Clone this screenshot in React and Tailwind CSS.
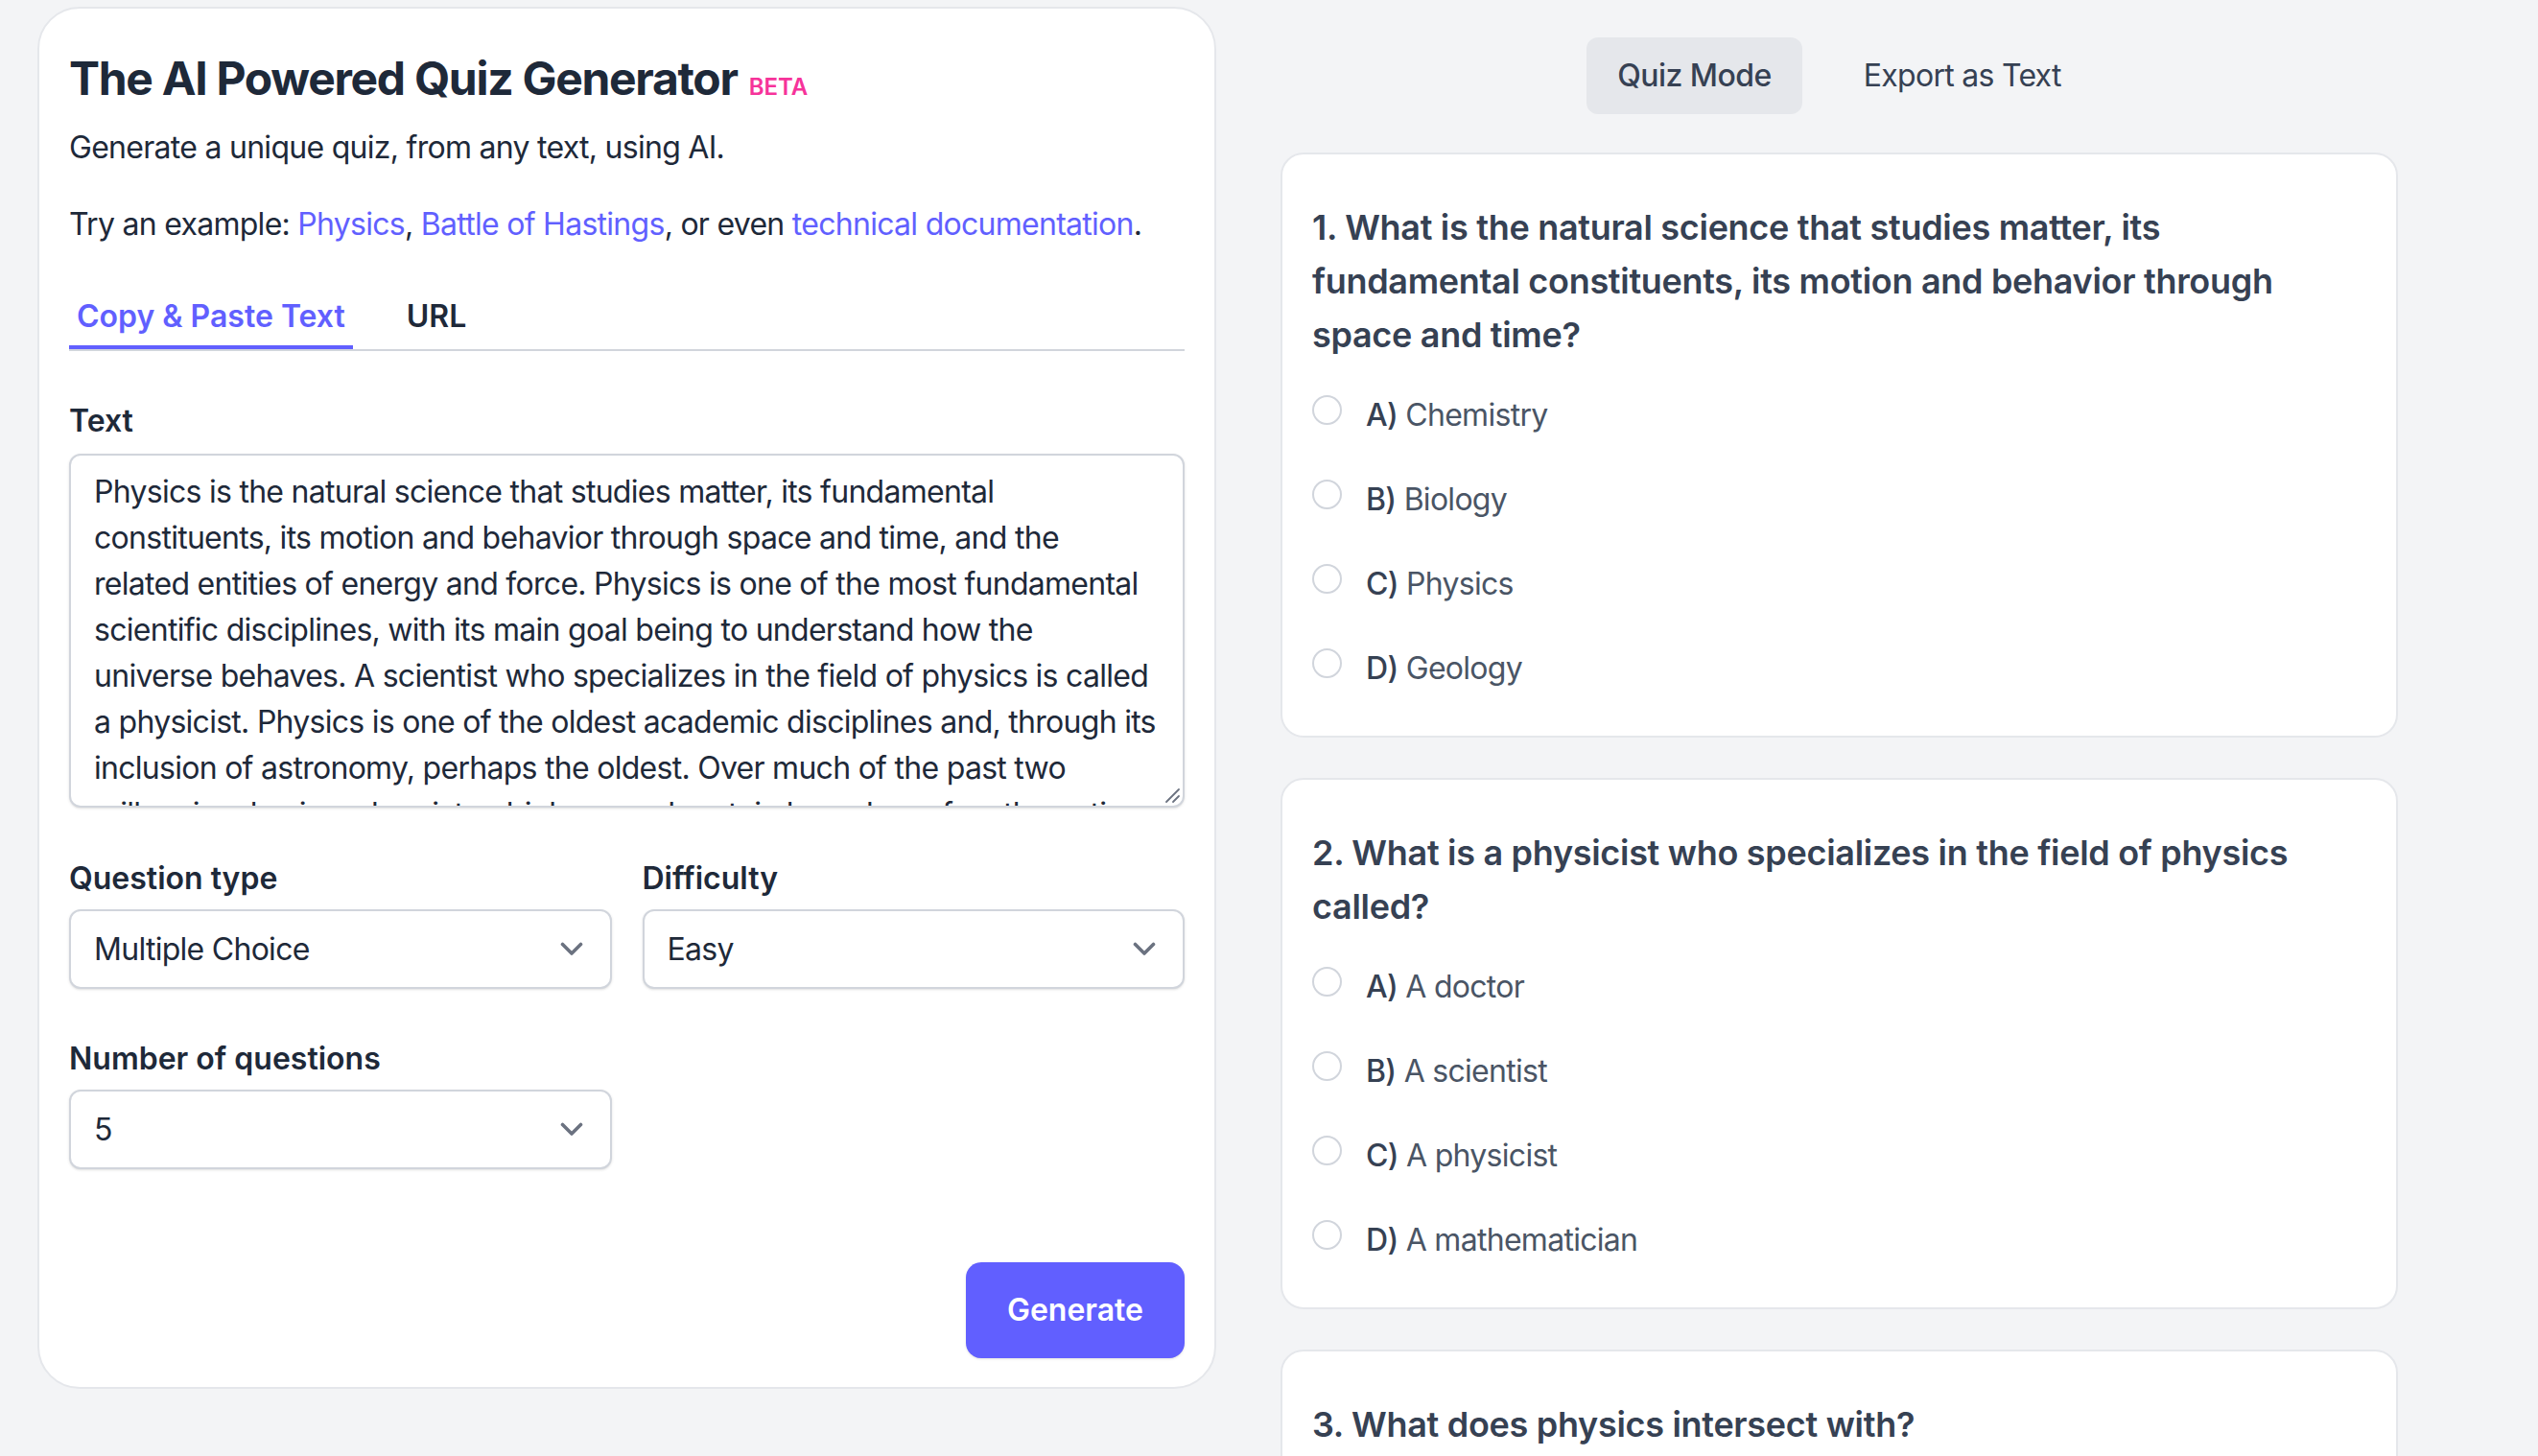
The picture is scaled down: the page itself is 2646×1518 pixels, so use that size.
import React from "react";

function Chevron() {
  return (
    <svg width="24" height="15" viewBox="0 0 24 15" fill="none" className="shrink-0">
      <path d="M2.5 2.5 L12 12 L21.5 2.5" stroke="#6b7280" strokeWidth="3.6" strokeLinecap="round" strokeLinejoin="round" />
    </svg>
  );
}

function Select({ value }) {
  return (
    <div className="flex h-[83px] items-center justify-between rounded-xl border-2 border-gray-300 bg-white pl-[24px] pr-[28px] shadow-sm">
      <span className="text-[32px] leading-[48px] text-gray-800">{value}</span>
      <Chevron />
    </div>
  );
}

function Label({ children }) {
  return <div className="text-[32px] font-semibold leading-[48px] tracking-normal text-gray-800">{children}</div>;
}

const textLines = [
  "Physics is the natural science that studies matter, its fundamental",
  "constituents, its motion and behavior through space and time, and the",
  "related entities of energy and force. Physics is one of the most fundamental",
  "scientific disciplines, with its main goal being to understand how the",
  "universe behaves. A scientist who specializes in the field of physics is called",
  "a physicist. Physics is one of the oldest academic disciplines and, through its",
  "inclusion of astronomy, perhaps the oldest. Over much of the past two",
  "millennia, physics, chemistry, biology, and certain branches of mathematics were",
];

const questions = [
  {
    q: "1. What is the natural science that studies matter, its fundamental constituents, its motion and behavior through space and time?",
    options: ["Chemistry", "Biology", "Physics", "Geology"],
  },
  {
    q: "2. What is a physicist who specializes in the field of physics called?",
    options: ["A doctor", "A scientist", "A physicist", "A mathematician"],
  },
  {
    q: "3. What does physics intersect with?",
    options: ["Chemistry and biology", "Many interdisciplinary areas of research", "Only mathematics", "Nothing"],
  },
];

const letters = ["A", "B", "C", "D"];

function QuestionCard({ q, options }) {
  return (
    <div className="rounded-[24px] border-2 border-gray-200 bg-white px-[31px] pb-[46px] pt-[48px]">
      <h3 className="text-[36px] font-semibold leading-[56px] tracking-[-0.3px] text-gray-700">{q}</h3>
      <div className="mt-8 flex flex-col gap-10">
        {options.map((o, i) => (
          <div key={o} className="flex items-start">
            <span className="mt-[3px] h-[31px] w-[31px] shrink-0 rounded-full border-2 border-gray-300 bg-white" />
            <span className="ml-[25px] text-[32px] leading-[48px] text-gray-600">
              <span className="font-medium text-gray-700">{letters[i]})</span> {o}
            </span>
          </div>
        ))}
      </div>
    </div>
  );
}

export default function App() {
  return (
    <div className="flex h-screen overflow-hidden bg-gray-100 font-['Inter',sans-serif] tracking-[-0.72px] text-gray-800">
      <div className="ml-[39px] mt-[7px] w-[1229px] shrink-0">
        <div className="rounded-[44px] border-2 border-gray-200 bg-white px-[31px] pb-[30px] pt-[41px]">
          <h1 className="text-[48px] font-bold leading-[64px] tracking-[-1.3px] text-gray-800">
            The AI Powered Quiz Generator
            <span className="ml-3 text-[24px] font-semibold leading-none tracking-normal text-pink-500">BETA</span>
          </h1>
          <p className="mt-4 text-[32px] leading-[48px]">Generate a unique quiz, from any text, using AI.</p>
          <p className="mt-8 text-[32px] leading-[48px]">
            Try an example: <span className="text-indigo-500">Physics</span>,{" "}
            <span className="text-indigo-500">Battle of Hastings</span>, or even{" "}
            <span className="text-indigo-500">technical documentation</span>.
          </p>

          <div className="mt-12 flex gap-[48px] border-b-2 border-gray-300 tracking-normal">
            <div className="border-b-4 border-indigo-500 px-[8px] pb-[6px] text-[32px] font-semibold leading-[48px] text-indigo-500">
              Copy &amp; Paste Text
            </div>
            <div className="border-b-4 border-transparent px-[8px] pb-[6px] text-[32px] font-semibold leading-[48px] text-gray-800">
              URL
            </div>
          </div>

          <div className="mt-[49px]">
            <Label>Text</Label>
            <div className="relative mt-[10px] h-[369px] overflow-hidden rounded-xl border-2 border-gray-300 bg-white pl-[24px] pt-[14px] shadow-sm">
              {textLines.map((l) => (
                <div key={l} className="whitespace-nowrap text-[32px] leading-[48px] text-gray-800">
                  {l}
                </div>
              ))}
              <svg className="absolute bottom-[2px] right-[2px]" width="18" height="18" viewBox="0 0 18 18">
                <path d="M3 16 L16 3 M10 16 L16 10" stroke="#6b7280" strokeWidth="1.8" strokeLinecap="round" />
              </svg>
            </div>
          </div>

          <div className="mt-[50px] grid grid-cols-2 gap-x-8">
            <div>
              <Label>Question type</Label>
              <div className="mt-2">
                <Select value="Multiple Choice" />
              </div>
            </div>
            <div>
              <Label>Difficulty</Label>
              <div className="mt-2">
                <Select value="Easy" />
              </div>
            </div>
            <div className="mt-[49px]">
              <Label>Number of questions</Label>
              <div className="mt-2">
                <Select value="5" />
              </div>
            </div>
          </div>

          <div className="mt-[97px] flex justify-end">
            <button className="h-[100px] rounded-2xl bg-indigo-500 px-[43px] text-[32px] font-semibold tracking-normal text-white shadow-sm">
              Generate
            </button>
          </div>
        </div>
      </div>

      <div className="ml-[67px] w-[1165px] shrink-0">
        <div className="mt-[39px] flex justify-center gap-8">
          <div className="flex h-[80px] items-center rounded-xl bg-gray-200 px-8 text-[32px] font-medium tracking-[-0.55px] text-gray-700">
            Quiz Mode
          </div>
          <div className="flex h-[80px] items-center px-8 text-[32px] text-gray-700">Export as Text</div>
        </div>
        <div className="mt-[40px] flex flex-col gap-[42px]">
          {questions.map((q) => (
            <QuestionCard key={q.q} q={q.q} options={q.options} />
          ))}
        </div>
      </div>
    </div>
  );
}
